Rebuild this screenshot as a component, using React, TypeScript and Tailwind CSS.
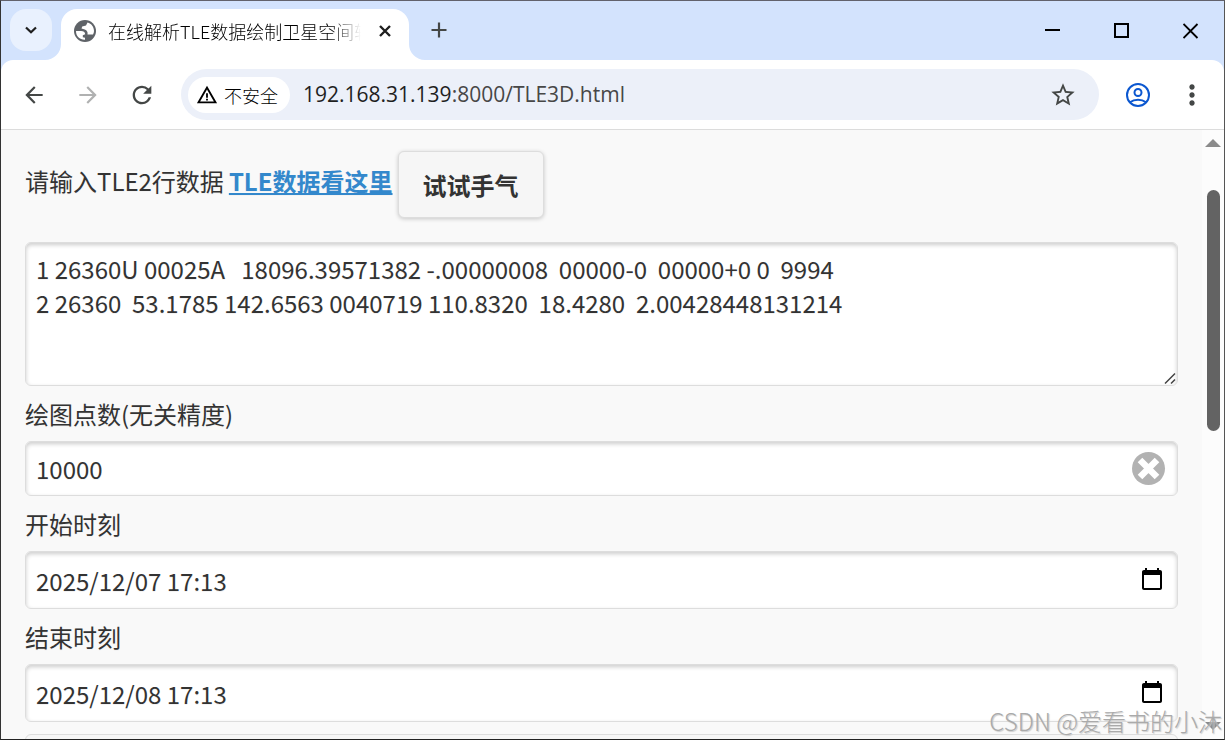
import { useState, type ReactNode } from "react";
import {
  MdArrowBack,
  MdArrowForward,
  MdCalendarToday,
  MdMoreVert,
  MdRefresh,
  MdStarBorder,
  MdWarningAmber,
} from "react-icons/md";

const TLE =
  "1 26360U 00025A   18096.39571382 -.00000008  00000-0  00000+0 0  9994\n" +
  "2 26360  53.1785 142.6563 0040719 110.8320  18.4280  2.00428448131214";

const fieldClass =
  "block w-full rounded-md border border-[#ddd] bg-white px-[10px] text-2xl text-[#333] shadow-[inset_0_2px_4px_rgba(0,0,0,0.2)] outline-none [text-shadow:0_1px_0_#f3f3f3]";

function GlobeIcon() {
  return (
    <svg viewBox="0 0 22 22" className="size-[22px] shrink-0" aria-hidden="true">
      <circle cx="11" cy="11" r="11" fill="#5f6368" />
      <path
        d="M2 11H7C9.500 11 11 12 11.200 14.200L8.800 15.200V17.200L11 17.700V19.700C6 20 1.800 16 2 11Z"
        fill="#fff"
      />
      <path
        d="M13.500 2.400C17.500 3.400 20 6.900 20 11C20 12.300 19.700 13.500 19 14.500H13.500C14 12 13 10.500 10.800 9.500L7.500 8.500L8.200 6.500L12 5.500Z"
        fill="#fff"
      />
    </svg>
  );
}

function ProfileIcon() {
  return (
    <svg viewBox="0 0 24 24" className="size-6" fill="none" stroke="#0b57d0" strokeWidth="2" aria-hidden="true">
      <circle cx="12" cy="12" r="11" />
      <circle cx="12" cy="9.500" r="3.500" />
      <path d="M4 19.300C6.200 17.600 9 16.700 12 16.700C15 16.700 17.800 17.600 20 19.300" />
    </svg>
  );
}

function TabStrip() {
  return (
    <div className="flex h-[59px] shrink-0 items-start bg-[#d3e3fd] pl-[9px]">
      <button
        type="button"
        aria-label="Search tabs"
        className="mt-2 flex size-[42px] items-center justify-center rounded-2xl bg-[#e9f1fe]"
      >
        <svg viewBox="0 0 12 8" className="h-2 w-3" aria-hidden="true">
          <path d="M1 1.500L6 6.300L11 1.500" fill="none" stroke="#1f1f1f" strokeWidth="2.200" />
        </svg>
      </button>
      <div className="relative mt-2 ml-[9px] flex h-[51px] w-[348px] items-center rounded-t-2xl bg-white pr-[18px] pb-2 pl-[13px]">
        <svg viewBox="0 0 16 16" className="absolute bottom-0 -left-4 size-4" aria-hidden="true">
          <path d="M16 0A16 16 0 0 1 0 16H16Z" fill="#fff" />
        </svg>
        <svg viewBox="0 0 16 16" className="absolute -right-4 bottom-0 size-4" aria-hidden="true">
          <path d="M0 0A16 16 0 0 0 16 16H0Z" fill="#fff" />
        </svg>
        <GlobeIcon />
        <span className="ml-3 flex-1 overflow-hidden text-lg leading-6 font-light whitespace-nowrap text-black [mask-image:linear-gradient(to_right,#000_88%,transparent)]">
          在线解析TLE数据绘制卫星空间轨迹
        </span>
        <button type="button" aria-label="Close tab" className="ml-[18px]">
          <svg viewBox="0 0 12 12" className="size-3" aria-hidden="true">
            <path d="M1 1L11 11M11 1L1 11" stroke="#1f1f1f" strokeWidth="2.400" />
          </svg>
        </button>
      </div>
      <button type="button" aria-label="New tab" className="mt-[21px] ml-[22px]">
        <svg viewBox="0 0 16 16" className="size-4" aria-hidden="true">
          <path d="M8 0.500V15.500M0.500 8H15.500" stroke="#444746" strokeWidth="2.200" />
        </svg>
      </button>
      <div className="ml-auto flex h-[59px] items-center gap-[53px] pr-[25px] text-black">
        <button type="button" aria-label="Minimize">
          <svg viewBox="0 0 16 16" className="size-4" aria-hidden="true">
            <path d="M0 7H15" stroke="currentColor" strokeWidth="2" />
          </svg>
        </button>
        <button type="button" aria-label="Maximize">
          <svg viewBox="0 0 16 16" className="size-4" aria-hidden="true">
            <path d="M1 1H14V14H1Z" fill="none" stroke="currentColor" strokeWidth="2" />
          </svg>
        </button>
        <button type="button" aria-label="Close">
          <svg viewBox="0 0 16 16" className="size-4" aria-hidden="true">
            <path d="M0.500 1L14.500 15M14.500 1L0.500 15" stroke="currentColor" strokeWidth="1.800" />
          </svg>
        </button>
      </div>
    </div>
  );
}

function Toolbar() {
  return (
    <div className="shrink-0 bg-[#d3e3fd]">
      <div className="flex h-[70px] items-center rounded-t-xl border-b border-[#dcdcdc] bg-white pr-4 pl-5">
        <button type="button" aria-label="Back">
          <MdArrowBack className="size-[26px] text-[#444746]" />
        </button>
        <button type="button" aria-label="Forward" className="ml-7">
          <MdArrowForward className="size-[26px] text-[#b0b1b1]" />
        </button>
        <button type="button" aria-label="Reload" className="ml-[27px]">
          <MdRefresh className="size-[28px] text-[#444746]" />
        </button>
        <div className="ml-[25px] flex h-[51px] flex-1 items-center rounded-full bg-[#ecf0f9] pr-[22px] pl-[7px]">
          <button
            type="button"
            className="flex h-9 items-center gap-[6px] rounded-full bg-white pr-3 pl-2 text-lg font-light text-black"
          >
            <MdWarningAmber className="size-[22px]" />
            不安全
          </button>
          <a
            href="#tle"
            className="ml-[13px] flex-1 font-['Open_Sans','Noto_Sans_CJK_SC',sans-serif] text-[21px] text-[#474747]"
          >
            <span className="text-[#1f1f1f]">192.168.31.139</span>:8000/TLE3D.html
          </a>
          <button type="button" aria-label="Bookmark">
            <MdStarBorder className="size-[28px] text-[#444746]" />
          </button>
        </div>
        <button type="button" aria-label="Profile" className="ml-[27px]">
          <ProfileIcon />
        </button>
        <button type="button" aria-label="Menu" className="ml-[26px]">
          <MdMoreVert className="size-8 text-[#444746]" />
        </button>
      </div>
    </div>
  );
}

function Field({ id, label, children }: { id: string; label: string; children: ReactNode }) {
  return (
    <div>
      <label htmlFor={id} className="block pt-[11px] pb-[10px] text-2xl leading-[34px]">
        {label}
      </label>
      {children}
    </div>
  );
}

function DateField({ id, label, initial }: { id: string; label: string; initial: string }) {
  const [value, setValue] = useState(initial);
  return (
    <Field id={id} label={label}>
      <div className="relative">
        <input
          id={id}
          type="text"
          value={value}
          onChange={(e) => setValue(e.target.value)}
          className={`${fieldClass} h-[58px]`}
        />
        <button
          type="button"
          aria-label={`选择${label}`}
          className="absolute inset-y-0 right-[14px] flex items-center pb-[2px]"
        >
          <MdCalendarToday className="size-6 text-black" />
        </button>
      </div>
    </Field>
  );
}

function ScrollBar() {
  return (
    <div className="flex w-[22px] shrink-0 flex-col items-center bg-[#fcfcfc] py-[9px]">
      <svg viewBox="0 0 16 8" className="h-2 w-4" aria-hidden="true">
        <path d="M0 8L8 0L16 8Z" fill="#8b8b8b" />
      </svg>
      <div className="mt-[43px] h-[241px] w-[13px] rounded-full bg-[#636363]" />
      <svg viewBox="0 0 16 8" className="mt-auto h-2 w-4" aria-hidden="true">
        <path d="M0 0L8 8L16 0Z" fill="#8b8b8b" />
      </svg>
    </div>
  );
}

export default function App() {
  const [tle, setTle] = useState(TLE);
  const [points, setPoints] = useState("10000");

  return (
    <div className="relative flex h-screen flex-col overflow-hidden border border-t-[#62626c] border-r-[#555] border-b-[#222] border-l-[#333] bg-[#f9f9f9] font-['Noto_Sans_CJK_SC',sans-serif] text-[#333]">
      <TabStrip />
      <Toolbar />
      <div className="flex min-h-0 flex-1">
        <main className="min-w-0 flex-1 overflow-hidden px-6 pt-[21px] [text-shadow:0_1px_0_#f3f3f3]">
          <div className="flex items-start gap-[5px] text-2xl">
            <label htmlFor="tle" className="pt-[13px] leading-[34px]">
              请输入TLE2行数据
            </label>
            <a href="#tle" className="pt-[13px] leading-[34px] font-bold text-[#38c] underline">
              TLE数据看这里
            </a>
            <button
              type="button"
              onClick={() => setTle(TLE)}
              className="h-[67px] rounded-md border border-[#ddd] bg-[#f6f6f6] px-6 font-bold shadow-[0_1px_4px_rgba(0,0,0,0.2)]"
            >
              试试手气
            </button>
          </div>

          <div className="relative mt-6">
            <textarea
              id="tle"
              value={tle}
              onChange={(e) => setTle(e.target.value)}
              spellCheck={false}
              className={`${fieldClass} h-36 resize-none py-[9px] leading-[34px]`}
            />
            <svg viewBox="0 0 12 12" className="absolute right-[2px] bottom-[2px] size-3" aria-hidden="true">
              <path d="M1 11.500L11 1.500M7 11.500L11 7.500" stroke="#444" strokeWidth="1.500" />
            </svg>
          </div>

          <Field id="points" label="绘图点数(无关精度)">
            <div className="relative">
              <input
                id="points"
                type="text"
                value={points}
                onChange={(e) => setPoints(e.target.value)}
                className={`${fieldClass} h-[55px]`}
              />
              <button
                type="button"
                aria-label="Clear"
                onClick={() => setPoints("")}
                className="absolute inset-y-0 right-3 flex items-center"
              >
                <svg viewBox="0 0 34 34" className="size-[34px]" aria-hidden="true">
                  <circle cx="16.500" cy="16.500" r="16.500" fill="#b2b2b2" />
                  <path d="M8 8L25 25M25 8L8 25" stroke="#fff" strokeWidth="6.500" />
                </svg>
              </button>
            </div>
          </Field>

          <DateField id="start" label="开始时刻" initial="2025/12/07 17:13" />
          <DateField id="end" label="结束时刻" initial="2025/12/08 17:13" />

          <button
            type="button"
            aria-label="绘制"
            className="mt-3 block h-16 w-full rounded-md border border-[#ddd] bg-[#f6f6f6]"
          />
        </main>
        <ScrollBar />
      </div>
      <div className="pointer-events-none absolute right-[2px] bottom-0 text-2xl leading-9 font-light text-[#aaa] [text-shadow:1px_1px_1px_#ccc]">
        CSDN @爱看书的小沐
      </div>
    </div>
  );
}
